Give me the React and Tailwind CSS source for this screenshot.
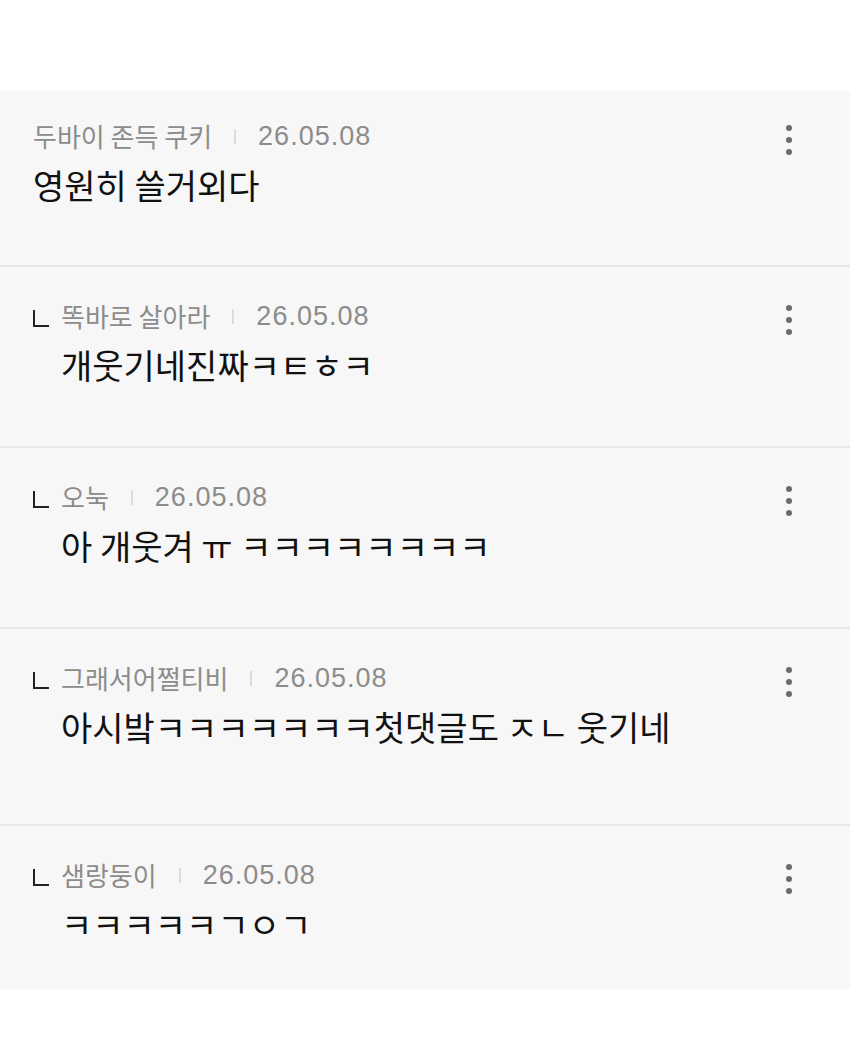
import React from 'react';

const comments = [
    { id: 1, reply: false, name: '두바이 존득 쿠키', date: '26.05.08', body: '영원히 쓸거외다', h: 'h-[176px] pt-[27px]' },
    { id: 2, reply: true, name: '똑바로 살아라', date: '26.05.08', body: '개웃기네진짜ㅋㅌㅎㅋ', h: 'h-[181px] pt-[31px]' },
    { id: 3, reply: true, name: '오눅', date: '26.05.08', body: '아 개웃겨 ㅠ ㅋㅋㅋㅋㅋㅋㅋㅋ', h: 'h-[181px] pt-[31px]' },
    { id: 4, reply: true, name: '그래서어쩔티비', date: '26.05.08', body: '아시밬ㅋㅋㅋㅋㅋㅋㅋ첫댓글도 ㅈㄴ 웃기네', h: 'h-[197px] pt-[31px]' },
    { id: 5, reply: true, name: '샘랑둥이', date: '26.05.08', body: 'ㅋㅋㅋㅋㅋㄱㅇㄱ', h: 'h-[163px] pt-[31px]' },
];

function MoreIcon() {
    return (
        <div className="flex flex-col items-center gap-[6px] pt-[7px]">
            <span className="block w-[6px] h-[6px] rounded-full bg-[#6b6b6b]" />
            <span className="block w-[6px] h-[6px] rounded-full bg-[#6b6b6b]" />
            <span className="block w-[6px] h-[6px] rounded-full bg-[#6b6b6b]" />
        </div>
    );
}

function Comment({ c, last }) {
    return (
        <div className={`${c.h} flex items-start justify-between pl-[33px] pr-[58px] ${last ? '' : 'border-b-2 border-[#e7e7e7]'}`}>
            <div className="flex items-start">
                {c.reply && (
                    <div className="mt-[12px] mr-[12px] w-[16px] h-[17px] border-l-2 border-b-2 border-[#222]" />
                )}
                <div className="flex flex-col">
                    <div className="flex items-center text-[26px] leading-[36px] text-[#8c8c8c]">
                        <span>{c.name}</span>
                        <span className="mx-[22px] w-[2px] h-[15px] bg-[#dcdcdc]" />
                        <span className="text-[27px] tracking-[1px]" style={{ fontFamily: '"Liberation Sans", Arial, sans-serif' }}>{c.date}</span>
                    </div>
                    <div className="mt-[11px] text-[34px] leading-[40px] text-[#111]">{c.body}</div>
                </div>
            </div>
            <MoreIcon />
        </div>
    );
}

export default function App() {
    return (
        <div
            className="w-[850px] h-[1062px] bg-white pt-[91px]"
            style={{ fontFamily: '"Noto Sans CJK KR", "Noto Sans", sans-serif' }}
        >
            <div className="bg-[#f7f7f7]">
                {comments.map((c, i) => (
                    <Comment key={c.id} c={c} last={i === comments.length - 1} />
                ))}
            </div>
        </div>
    );
}
